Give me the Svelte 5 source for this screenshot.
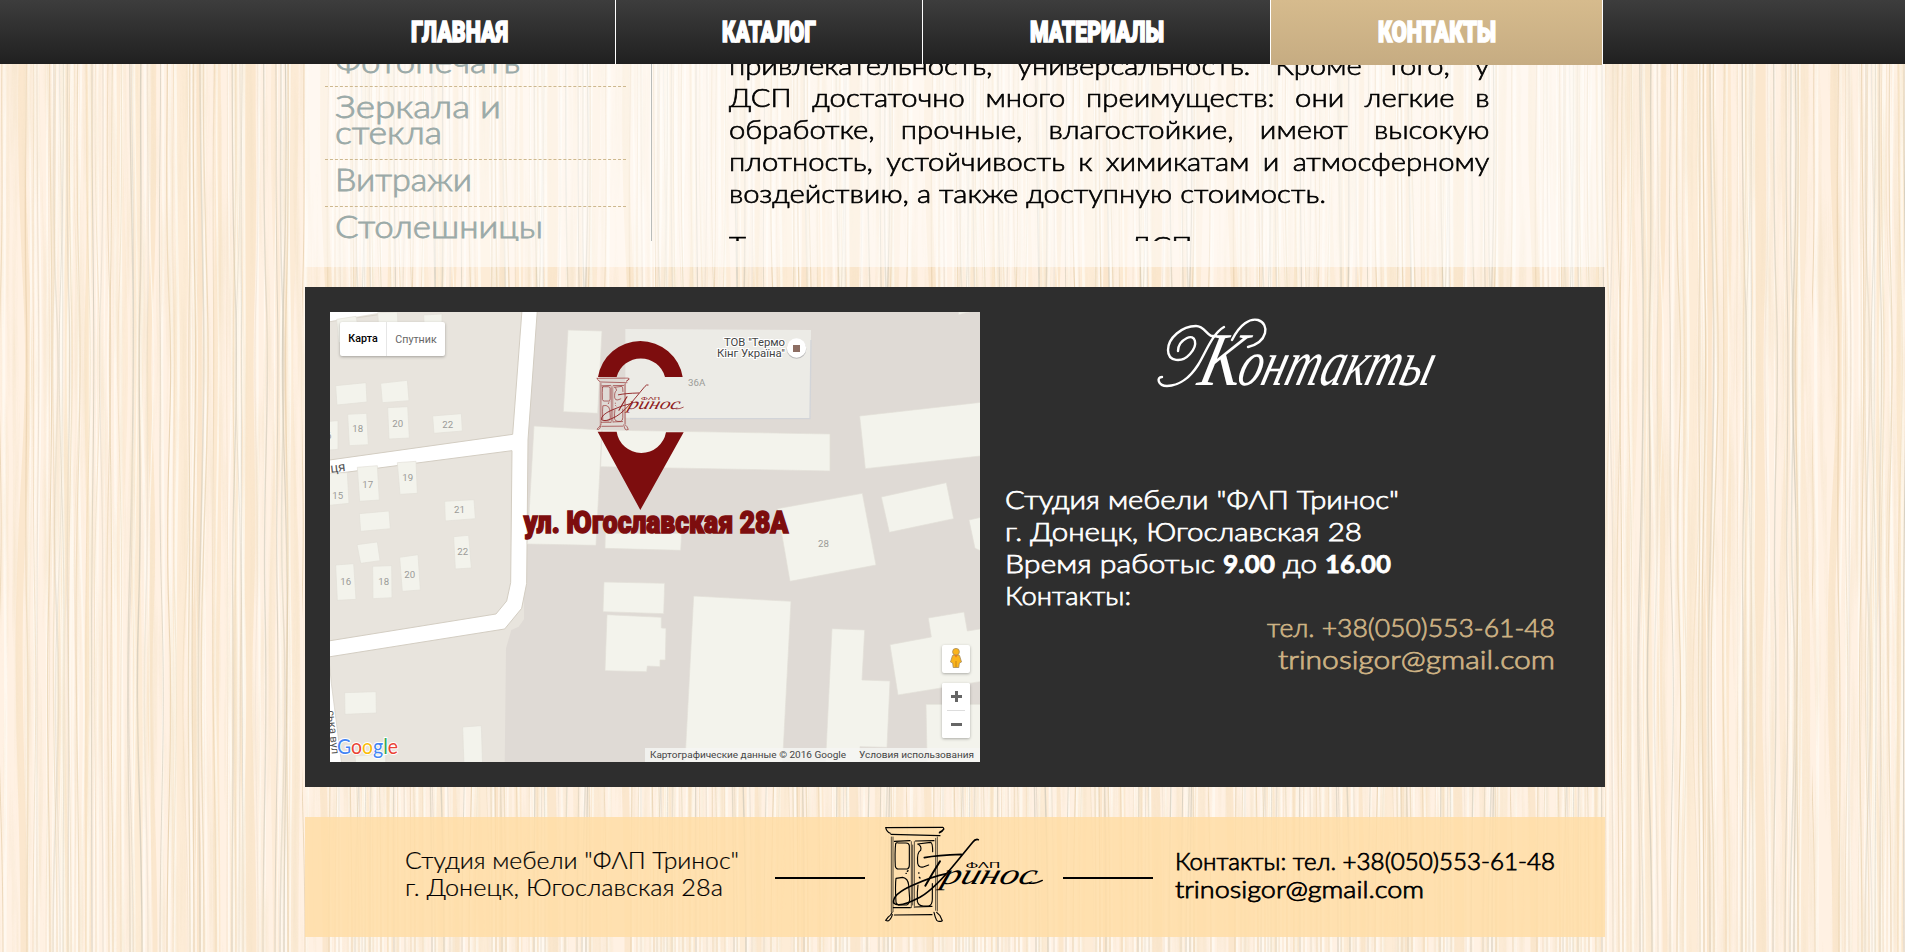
<script>
  const nav = [
    { label: 'ГЛАВНАЯ', w: 97, cell: 311 },
    { label: 'КАТАЛОГ', w: 94, cell: 306 },
    { label: 'МАТЕРИАЛЫ', w: 134, cell: 347 },
    { label: 'КОНТАКТЫ', w: 118, cell: 331, active: true }
  ];

  const side = [
    { lines: [['Фотопечать', 185]] },
    { lines: [['Зеркала и', 166], ['стекла', 107]] },
    { lines: [['Витражи', 137]] },
    { lines: [['Столешницы', 208]] }
  ];

  const article = [
    'привлекательность, универсальность. Кроме того, у',
    'ДСП достаточно много преимуществ: они легкие в',
    'обработке, прочные, влагостойкие, имеют высокую',
    'плотность, устойчивость к химикатам и атмосферному'
  ];

  // Wood grain tile: repeatable pseudo-random wobble for each vein
  const TILE = 302;
  let seed = 17;
  const rnd = () => ((seed = (seed * 16807) % 2147483647) / 2147483647);
  const wave = (x, amp) => {
    const a = (rnd() - 0.5) * amp, b = (rnd() - 0.5) * amp, c = (rnd() - 0.5) * amp;
    return `M${x} 0C${x + a} 110 ${x + b} 190 ${x + c} 300S${x + b} 480 ${x + a} 610S${x} 800 ${x} 952`;
  };
  const veinXs = [3, 27, 33, 37, 46, 50, 53, 57, 60, 63, 68, 71, 75, 79, 86, 92, 96, 103, 109, 113, 121, 130, 133,
    142, 148, 160, 167, 173, 188, 190, 194, 200, 204, 216, 227, 232, 236, 239, 243, 258, 263, 275, 280, 284, 288];
  const bands = [[24, 7], [66, 8], [88, 6], [120, 7], [137, 10], [155, 5], [180, 14], [200, 6], [217, 7], [233, 6], [250, 13], [276, 6], [293, 11]]
    .map(([x, w]) => ({ d: wave(x, 9), w, o: 0.35 + rnd() * 0.4 }));
  const veins = veinXs.map((x) => ({ d: wave(x, 7), o: 0.3 + rnd() * 0.5, w: 0.7 + rnd() * 0.9, g: rnd() > 0.6 }));
  const lights = veinXs.map((x) => ({ d: wave(x + 2, 6), w: 1 + rnd() * 2.2 }));
</script>

{#snippet fit(text, width, size, height, base, cls)}
  <svg class="fit {cls}" {width} {height}>
    <text x="0" y={base} font-size={size} textLength={width} lengthAdjust="spacingAndGlyphs">{text}</text>
  </svg>
{/snippet}

{#snippet logo()}
  <g fill="none" stroke="currentColor" stroke-linecap="round" stroke-linejoin="round">
    <path stroke-width="3.4" d="M77 38Q80 51 91 55M77 38L248 37Q257 42 238 52M93 58L240 62M252 42Q248 50 238 54" />
    <path stroke-width="2" d="M94 66V290M99 66V290M232 66V288M227 70V286M154 80V278M163 80V278M158 90V270" />
    <path stroke-width="3.4" d="M103 79L150 77M166 78L222 77M100 278H151M166 276L216 274M103 300L216 299" />
    <path stroke-width="3.4" d="M107 86Q104 112 106 154Q108 162 115 162H142Q148 160 148 150V92Q147 84 138 84H116Q108 82 107 86ZM173 87Q186 93 182 106Q170 112 173 145Q176 159 190 156L206 150M173 87L212 82Q218 84 218 110M108 190Q105 210 108 262Q111 271 122 270H140Q148 268 149 252L146 210Q144 190 128 187ZM174 210Q171 230 172 259Q175 272 190 273H206Q217 270 217 252V206" />
    <path stroke-width="3.4" d="M96 292Q94 300 84 307L77 316L84 318Q93 314 97 299M222 292Q225 306 230 316Q238 322 247 317L240 302L230 292" />
    <path stroke-width="4" d="M138 175h1M142 169l2-2M176 174h1M178 187l2 2" />
    <path stroke-width="5" d="M193 128Q232 120 304 118M355 74Q346 71 338 82L290 140Q224 221 181 246Q118 280 101 264Q96 238 158 211Q218 184 260 176" />
    <path stroke-width="6" d="M240 139Q218 174 196 212" />
    <path stroke-width="4" d="M508 205Q530 206 547 196" />
  </g>
  <text class="logo-script" transform="translate(240 207) skewX(-18)" font-size="88" textLength="282" lengthAdjust="spacingAndGlyphs" fill="currentColor">ринос</text>
  <text class="logo-small" x="317" y="158" font-size="22" textLength="104" lengthAdjust="spacingAndGlyphs" fill="currentColor">ФΛП</text>
{/snippet}

<div class="page">
  <svg class="wood" width="1905" height="952" aria-hidden="true">
    <defs>
      <pattern id="grain" width={TILE} height="952" patternUnits="userSpaceOnUse">
        <rect width={TILE} height="952" fill="#fff1e3" />
        {#each bands as b}<path d={b.d} fill="none" stroke="#f9e3c4" stroke-width={b.w} opacity={b.o} />{/each}
        {#each lights as l}<path d={l.d} fill="none" stroke="#fffaf3" stroke-width={l.w} opacity=".75" />{/each}
        {#each veins as v}<path d={v.d} fill="none" stroke={v.g ? '#cfc8b8' : '#e3cba5'} stroke-width={v.w} opacity={v.o} />{/each}
      </pattern>
      <filter id="fibre" x="0" y="0" width="100%" height="100%">
        <feTurbulence type="fractalNoise" baseFrequency="0.16 0.005" numOctaves="4" seed="6" />
        <feColorMatrix values="0 0 0 0 .91  0 0 0 0 .77  0 0 0 0 .58  2.6 0 0 0 -1.15" />
      </filter>
    </defs>
    <rect width="1905" height="952" fill="url(#grain)" />
    <rect width="1905" height="952" filter="url(#fibre)" opacity=".6" />
  </svg>

  <nav class="bar">
    <div class="menu">
      {#each nav as n}
        <a href="#{n.label}" class:active={n.active} style="width:{n.cell}px">{@render fit(n.label, n.w, 29, 64, 41.5, 'heavy')}</a>
      {/each}
    </div>
  </nav>

  <main>
    <section class="content">
      <div class="clip">
        <ul class="side">
          {#each side as s}
            <li>
              {#each s.lines as [t, w]}{@render fit(t, w, 30.5, 26, 22, 'thin')}{/each}
            </li>
          {/each}
        </ul>
        <article>
          {#each article as line}<p>{line}</p>{/each}
          <p class="short">воздействию, а также доступную стоимость.</p>
          <p class="cut"><span>Т</span><span>ДСП</span></p>
        </article>
      </div>
    </section>

    <section class="contacts">
      <div class="map">
        <svg width="650" height="450">
          <rect width="650" height="450" fill="#dfdad5" />
          <g transform="translate(-10 -12) scale(.33333)">
            <path fill="#e8e4dd" d="M28 36H610L600 420L612 850V958L596 980L574 990L558 1045L554 1400H28Z" />
            <path fill="#fff" stroke="#d3cdc2" stroke-width="3" d="M0 484L578 403L606 30H652L624 420L620 850L605 925L554 987L0 1075V1027L528 942L560 903L572 848L576 452L0 527Z" />
            <path fill="#fff" d="M30 36H190L30 64Z" />
            <path fill="none" stroke="#d3cdc2" stroke-width="2" d="M30 65L190 42" />
            <path fill="#fff" stroke="#d3cdc2" stroke-width="2" d="M28 1090L34 1150L66 1400H20Z" />
            <g fill="#f3f3ec" stroke="#e3dfd8" stroke-width="2">
              <path d="M50 58L108 49L116 90L56 130ZM173 38L232 36L234 80H176ZM311 45L366 42V80H313ZM47 257L138 248L141 306L51 315ZM182 250L262 241L267 302L187 308ZM83 343L140 340L145 434L88 437ZM203 323L263 320L268 414L207 417ZM338 348L424 341L427 393L342 400ZM28 364L54 362V448L28 450ZM112 502L172 497L178 600L119 604ZM232 488L288 484L292 580L240 583ZM28 520L82 518L87 610L28 616ZM374 604L462 599L466 656L376 663ZM118 641L207 633L211 686L122 694ZM401 710L446 706L454 804L406 807ZM111 734L172 726L180 782L122 790ZM47 795L101 791L108 898L52 901ZM158 799L215 797L216 893L159 896ZM239 772L294 764L301 870L247 874ZM74 1178L168 1175L169 1239L75 1243ZM428 1281L484 1277L488 1400H432ZM105 1368L197 1362V1400H108Z" />
            </g>
            <g class="num" font-size="29">
              <text x="97" y="397">18</text><text x="217" y="380">20</text><text x="367" y="383">22</text><text x="2" y="418">16</text>
              <text x="127" y="564">17</text><text x="247" y="544">19</text><text x="37" y="598">15</text><text x="402" y="640">21</text>
              <text x="412" y="766">22</text><text x="61" y="856">16</text><text x="175" y="856">18</text><text x="253" y="834">20</text>
            </g>
            <text class="road" x="32" y="518" font-size="40" transform="rotate(-6 32 518)">ця</text>
            <text class="road" x="22" y="1232" font-size="33" transform="rotate(84 22 1232)">ська вул</text>
          </g>
          <g transform="translate(170 8) scale(.33333)" fill="#f3f3ec" stroke="#e3dfd8" stroke-width="2">
            <path d="M204 30L306 33L293 280L190 275ZM102 318L306 330L288 676L82 672ZM306 330L990 342V453L302 440ZM316 640H545L542 691L315 685Z" />
            <path fill="#ecebe6" stroke="none" d="M376 27L933 30L930 295L376 293Z" /><path fill="none" stroke="#d2d4d8" stroke-width="4" d="M933 60L930 296H390" />
          </g>
          <g transform="translate(350 -12) scale(.33333)" fill="#f3f3ec" stroke="#e3dfd8" stroke-width="2">
            <path d="M539 348L920 305V466L556 506ZM604 591L799 548L821 656L628 697ZM867 660L920 648V760L885 745ZM292 626L547 580L588 795L330 844ZM835 36H868L836 44Z" />
          </g>
          <g transform="translate(310 228) scale(.33333)" fill="#f3f3ec" stroke="#e3dfd8" stroke-width="2">
            <path d="M-108 126L74 130L71 221L-111 215ZM-99 224L64 232V264L78 265L76 360H60V380L22 378L20 395L-105 392ZM161 168L453 184L426 700H133ZM576 266L674 270L666 420L750 423L741 622L660 620V700H555ZM750 314L874 291L865 234L972 216L982 273L1050 262V420L774 465ZM858 493H1050V700H862Z" />
          </g>
          <g class="num"><text x="358" y="74" font-size="9.7">36А</text><text x="488" y="235" font-size="9.7">28</text></g>
          <g class="poi" font-size="10.2"><text x="394" y="34" textLength="61" lengthAdjust="spacingAndGlyphs">ТОВ "Термо</text><text x="387" y="45" textLength="68" lengthAdjust="spacingAndGlyphs">Кінг Україна"</text></g>
          <circle cx="466.500" cy="37" r="9.800" fill="#bbb" /><circle cx="466.500" cy="36" r="9.700" fill="#fff" /><path fill="#8d6e63" d="M463 33h7v7h-7z" />
          <g transform="translate(170 8) scale(.33333)" fill="#7d0d0e" color="#8f2022">
            <path d="M294 171A128.700 128.700 0 0 1 548 171H495A75 75 0 0 0 350 171ZM293 335H350A75 75 0 0 0 498 337H551L421 570Z" />
            <g transform="translate(249 154) scale(.55)">{@render logo()}</g>
            <text class="address" x="71" y="640" font-size="96" textLength="794" lengthAdjust="spacingAndGlyphs">ул. Югославская 28А</text>
          </g>
          <text class="google" x="7" y="442" font-size="21.500" textLength="61" lengthAdjust="spacingAndGlyphs"><tspan fill="#4285f4">G</tspan><tspan fill="#ea4335">o</tspan><tspan fill="#fbbc05">o</tspan><tspan fill="#4285f4">g</tspan><tspan fill="#34a853">l</tspan><tspan fill="#ea4335">e</tspan></text>
          <rect x="315" y="436" width="335" height="14" fill="#f5f5f3" opacity=".82" />
          <g class="legal" font-size="9.6"><text x="320" y="446" textLength="196" lengthAdjust="spacingAndGlyphs">Картографические данные © 2016 Google</text><text x="529" y="446" textLength="115" lengthAdjust="spacingAndGlyphs">Условия использования</text></g>
        </svg>
        <div class="types"><b>Карта</b><span>Спутник</span></div>
        <div class="tools">
          <button aria-label="Street View">
            <svg width="28" height="28"><g fill="#fbb41a" stroke="#a48a5c" stroke-width=".8"><path d="M10.500 10.500Q14 8.500 17.500 10.500L19.500 17L17.300 18L16.800 22.500H11.200L10.700 18L8.500 17Z" /><circle cx="14" cy="6.800" r="3.400" /></g><path d="M12.500 10.300h3L14 12.500z" fill="#e8711a" /><path d="M14 16v6" stroke="#c58412" /></svg>
          </button>
          <div class="zoom">
            <button aria-label="+"><svg width="28" height="27"><path d="M9 13.500h11M14.500 8v11" stroke="#666" stroke-width="3" /></svg></button>
            <i></i>
            <button aria-label="−"><svg width="28" height="27"><path d="M9 13.500h11" stroke="#666" stroke-width="3" /></svg></button>
          </div>
        </div>
      </div>
      <div class="info">
        <svg class="heading" width="300" height="80">
          <text class="cap" transform="translate(38 69) skewX(-14)" font-size="76" textLength="42" lengthAdjust="spacingAndGlyphs">К</text>
          <text transform="translate(77 69) skewX(-16)" font-size="65" textLength="194" lengthAdjust="spacingAndGlyphs">онтакты</text>
          <path d="M58 19C50 24 48 10 38 10C24 10 10 22 10 34C10 46 24 47 32 38C41 28 37 18 29 22C23 25 20 30 20 35M4 61C-2 61 0 70 9 70C22 70 33 60 40 49C48 36 54 18 66 11M74 24C82 8 92 2 100 4C112 8 110 26 90 31" fill="none" stroke="#fff" stroke-width="2.400" stroke-linecap="round" />
        </svg>
        <div class="details">
          {@render fit('Студия мебели "ФΛП Тринос"', 394, 25, 32, 24, 'text')}
          {@render fit('г. Донецк, Югославская 28', 357, 25, 32, 24, 'text')}
          <div class="hours">
            {@render fit('Время работыс', 210, 25, 32, 24, 'text')}
            {@render fit('9.00', 52, 25, 32, 24, 'text strong')}
            {@render fit('до', 34, 25, 32, 24, 'text')}
            {@render fit('16.00', 66, 25, 32, 24, 'text strong')}
          </div>
          {@render fit('Контакты:', 126, 25, 32, 24, 'text')}
          <div class="links">
            {@render fit('тел. +38(050)553-61-48', 288, 25, 32, 24, 'text')}
            {@render fit('trinosigor@gmail.com', 277, 25, 32, 24, 'text')}
          </div>
        </div>
      </div>
    </section>

    <footer>
      <div class="left">
        {@render fit('Студия мебели "ФΛП Тринос"', 334, 22.5, 27, 21, 'light')}
        {@render fit('г. Донецк, Югославская 28а', 318, 22.5, 27, 21, 'light')}
      </div>
      <hr />
      <svg class="mark" width="203" height="120" viewBox="0 6 609 360">{@render logo()}</svg>
      <hr />
      <div class="right">
        {@render fit('Контакты: тел. +38(050)553-61-48', 380, 22.5, 28, 22, 'text')}
        {@render fit('trinosigor@gmail.com', 249, 22.5, 28, 22, 'text')}
      </div>
    </footer>
  </main>
</div>

<style>
  :global(body) { margin: 0; overflow: hidden; }
  .page { position: relative; width: 1905px; height: 952px; overflow: hidden; font-family: Lato, 'Open Sans', sans-serif; }
  .wood { position: absolute; inset: 0; }
  .fit { display: block; overflow: visible; fill: currentColor; }
  .light { font-weight: 300; stroke: currentColor; stroke-width: .2; }
  .thin { font-weight: 300; stroke: currentColor; stroke-width: .8; }
  .text { font-weight: 300; stroke: currentColor; stroke-width: .75; }
  .strong { font-weight: 700; }
  .heavy { font-family: Roboto, sans-serif; font-weight: 900; stroke: currentColor; stroke-width: 1.7; }

  .bar { position: relative; z-index: 2; height: 64px; background: linear-gradient(#3d3d3d, #202020); }
  .menu { display: flex; margin-left: 304px; height: 65px; }
  .menu a { display: flex; justify-content: center; height: 64px; color: #fff; text-decoration: none; border-right: 1px solid #fff; }
  .menu .active { height: 65px; background: linear-gradient(#d6bb8d, #c6ac82); }

  main { position: relative; width: 1300px; margin-left: 305px; }
  .content { height: 203px; background: rgba(255, 255, 255, .5); }
  .clip { display: flex; height: 177px; overflow: hidden; }
  .side { list-style: none; margin: -21px 0 0; padding: 0 25px 0 20px; width: 301px; border-right: 1px solid #b9bcba; color: #9baaa8; }
  .side li { padding: 9px 0 12px 10px; border-bottom: 1px dashed #cdb88e; height: 25px; }
  .side li:nth-child(1) { padding-top: 8px; height: 23px; }
  .side li:nth-child(2) { padding-top: 9px; height: 51px; }
  article { margin: -15px 0 0 77px; width: 650px; font-size: 25px; line-height: 32px; font-weight: 300; -webkit-text-stroke: .65px #000; transform: scaleX(1.17); transform-origin: 0 0; }
  article p { margin: 0; text-align: justify; text-align-last: justify; white-space: nowrap; }
  article .short { width: 510px; }
  article .cut { display: flex; gap: 328px; margin-top: 20px; }

  .contacts { display: flex; box-sizing: border-box; height: 500px; margin-top: 20px; padding: 25px; background: #2e2e2e; color: #fff; }
  .map { position: relative; width: 650px; height: 450px; overflow: hidden; font-family: Roboto, sans-serif; }
  .map > svg { display: block; }
  .num { fill: #9b9b98; stroke: none; font-family: Roboto, sans-serif; }
  .road { fill: #555; font-family: Roboto, sans-serif; }
  .poi { fill: #444; stroke: #fff; stroke-width: 2; paint-order: stroke; }
  .address { font-family: Roboto, sans-serif; font-weight: 900; stroke: #7d0d0e; stroke-width: 5; }
  .google { font-family: Lato, sans-serif; font-weight: 400; stroke: #fff; stroke-width: 2; paint-order: stroke; }
  .legal { fill: #444; }
  .logo-script { font-family: 'Liberation Serif', serif; font-style: italic; }
  .logo-small { font-family: Lato, sans-serif; font-weight: 400; }
  .types { position: absolute; left: 10px; top: 10px; display: flex; height: 34px; align-items: center; background: #fff; border-radius: 2px; box-shadow: 0 1px 3px rgba(0, 0, 0, .3); font-size: 10.7px; color: #666; }
  .types b { width: 46px; line-height: 34px; text-align: center; font-weight: 500; color: #000; border-right: 1px solid #e6e6e6; }
  .types span { width: 58px; text-align: center; }
  .tools { position: absolute; right: 10px; bottom: 24px; display: flex; flex-direction: column; gap: 10px; }
  .tools button { display: block; padding: 0; border: 0; width: 28px; background: #fff; border-radius: 2px; }
  .tools > button { height: 28px; box-shadow: 0 1px 3px rgba(0, 0, 0, .3); }
  .tools svg { display: block; }
  .zoom { background: #fff; border-radius: 2px; box-shadow: 0 1px 3px rgba(0, 0, 0, .3); height: 55px; }
  .zoom i { display: block; height: 1px; margin: 0 5px; background: #ddd; }

  .info { flex: 1; display: flex; flex-direction: column; padding-left: 25px; }
  .heading { margin: 4px 0 0 153px; overflow: visible; fill: #fff; font-family: 'Liberation Serif', serif; font-style: italic; }
  .cap { fill: #fff; }
  .details { margin-top: 89px; }
  .hours { display: flex; gap: 8px; }
  .links { display: flex; flex-direction: column; align-items: flex-end; padding-right: 25px; color: #cdb284; }

  footer { display: flex; box-sizing: border-box; height: 120px; margin-top: 30px; padding-left: 100px; background: rgba(255, 221, 167, .86); }
  .left { width: 370px; padding-top: 31px; }
  .mark { margin-left: -5px; }
  .right { padding-top: 31px; margin-left: 22px; }
  hr { width: 90px; height: 2px; margin: 60px 0 0; border: 0; background: #000; }
</style>
